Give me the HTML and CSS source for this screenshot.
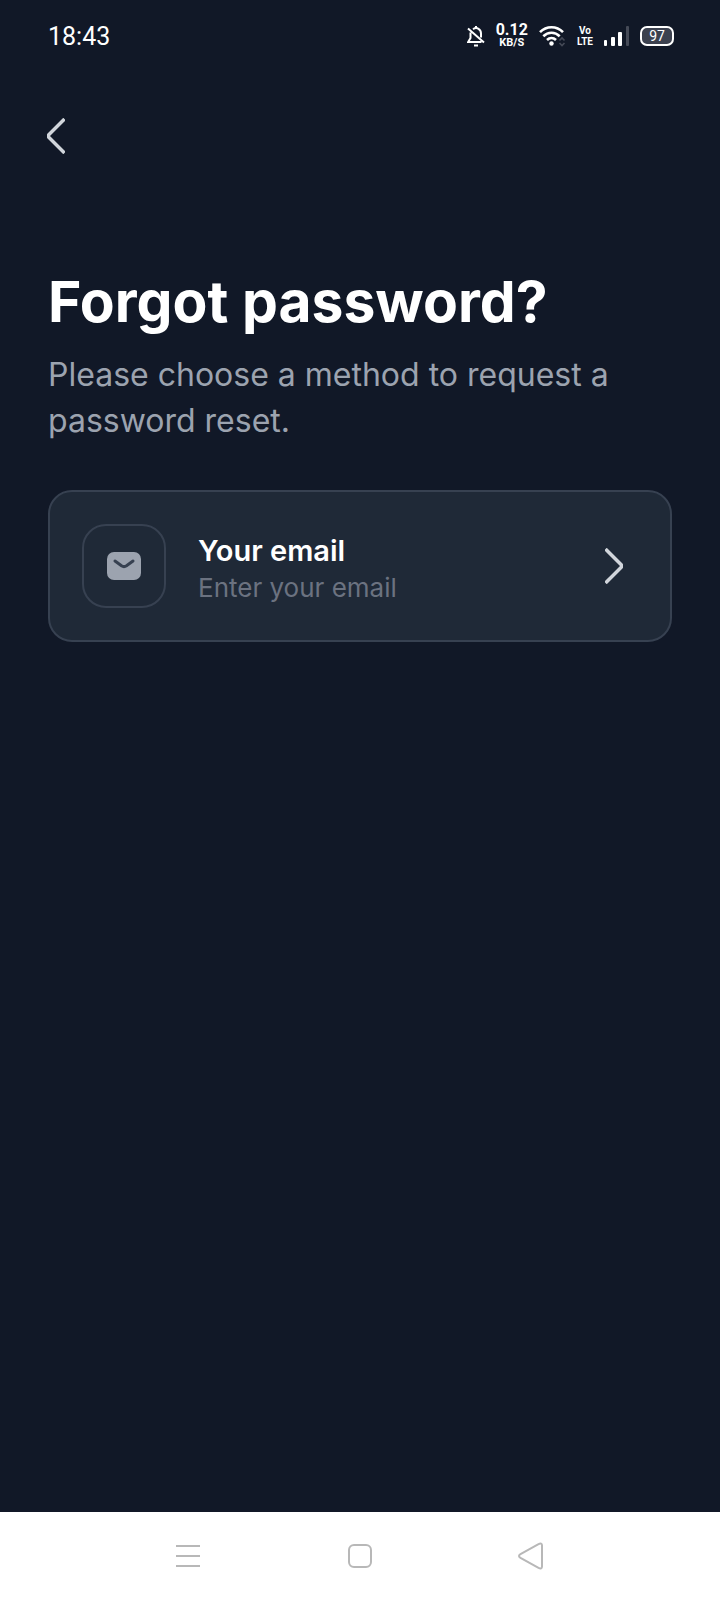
FILE: index.html
```
<!DOCTYPE html>
<html lang="en">
<head>
<meta charset="utf-8">
<meta name="viewport" content="width=device-width, initial-scale=1">
<title>Forgot password</title>
<link rel="stylesheet" href="styles.css">
</head>
<body>
<div class="screen">
  <header class="status">
    <time class="clock">18:43</time>
    <div class="indicators">
      <svg class="bell" width="18" height="22" viewBox="0 0 18 22" fill="none" stroke="currentColor" stroke-width="2">
        <path d="M6 4.200C10 1.400 14 4.500 14 8.500V12.500M3.500 7.500V13L1.200 17H14.500M1 3.500L17 17.500"/>
        <path d="M9 1v2M7 20.500h4"/>
      </svg>
      <div class="speed"><span class="rate">0.12</span><span class="unit">KB/S</span></div>
      <svg class="wifi" width="27" height="22" viewBox="0 0 27 22" fill="none" stroke="currentColor" stroke-width="2.600">
        <path d="M1 7.200C7.500 0.600 17.500 0.600 24 7.200M4.300 11.200C9 6.600 16 6.600 20.700 11.200M8 15C10.700 12.400 14.300 12.400 17 15"/>
        <circle cx="12.500" cy="18.500" r="2.200" fill="currentColor" stroke="none"/>
        <path class="dim" stroke-width="1.600" d="M20.500 15.500L23 13L25.500 15.500M20.500 18L23 20.500L25.500 18"/>
      </svg>
      <div class="volte"><span>Vo</span><span>LTE</span></div>
      <svg width="25" height="22" viewBox="0 0 25 22" fill="currentColor">
        <rect x="0" y="15" width="3" height="6" rx="1"/>
        <rect x="7" y="12" width="4" height="9" rx="1"/>
        <rect x="14" y="7" width="4" height="14" rx="1"/>
        <rect x="22" y="1" width="3" height="20" rx="1" fill="#454a57"/>
      </svg>
      <div class="battery">97</div>
    </div>
  </header>

  <main class="content">
    <button class="back" type="button" aria-label="Back">
      <svg width="18" height="36" viewBox="0 0 18 36" fill="none" stroke="currentColor" stroke-width="3.500"><path d="M17.500 1L2 16.500Q.5 18 2 19.500L17.500 35"/></svg>
    </button>
    <h1 class="title">Forgot password?</h1>
    <p class="lead">Please choose a method to request a password reset.</p>
    <button class="method" type="button">
      <span class="tile">
        <svg width="36" height="30" viewBox="0 0 36 30"><rect x="1" y="1" width="34" height="28" rx="7" fill="#9ca3af"/><path d="M9 10L15.500 14.800Q18 16.500 20.500 14.800L27 10" fill="none" stroke="#374151" stroke-width="3" stroke-linecap="round"/></svg>
      </span>
      <span class="labels">
        <span class="name">Your email</span>
        <span class="hint">Enter your email</span>
      </span>
      <svg class="go" width="18" height="36" viewBox="0 0 18 36" fill="none" stroke="currentColor" stroke-width="3.500"><path d="M.5 1L16 16.500Q17.500 18 16 19.500L.5 35"/></svg>
    </button>
  </main>

  <nav class="system" aria-label="System">
    <button type="button" aria-label="Recent apps"><svg width="28" height="28" viewBox="0 0 28 28"><path d="M2 4h24M2 14h24M2 24h24"/></svg></button>
    <button type="button" aria-label="Home"><svg width="28" height="28" viewBox="0 0 28 28"><rect x="3" y="3" width="22" height="22" rx="5"/></svg></button>
    <button type="button" aria-label="Back"><svg width="28" height="28" viewBox="0 0 28 28"><path d="M20.500 2.100Q24 .5 24 3.500V24.500Q24 27.500 20.500 25.900L2.500 15.800Q-.5 14 2.500 12.200Z"/></svg></button>
  </nav>
</div>
</body>
</html>
```
FILE: styles.css
```
* { box-sizing: border-box; }
body {
  margin: 0;
  background: #111827;
  color: #fff;
  font-family: Inter, "Liberation Sans", sans-serif;
}
button {
  margin: 0;
  padding: 0;
  border: 0;
  background: none;
  color: inherit;
  font: inherit;
  text-align: left;
  cursor: pointer;
}
svg { display: block; flex: none; }
.screen {
  display: flex;
  flex-direction: column;
  min-height: 100vh;
}
.status {
  display: flex;
  align-items: center;
  justify-content: space-between;
  height: 72px;
  padding: 0 46px 0 48px;
  font-family: Roboto, sans-serif;
}
.clock { padding-top: 2px; font-size: 25px; line-height: 32px; }
.indicators { display: flex; align-items: center; gap: 11px; }
.speed, .volte {
  display: flex;
  flex-direction: column;
  align-items: center;
  font-weight: 700;
}
.rate { font-size: 16px; line-height: 12px; }
.unit { font-size: 11px; line-height: 13px; }
.volte {
  font-family: "Liberation Sans Narrow", Roboto, sans-serif;
  font-size: 10px;
  line-height: 11px;
}
.dim { stroke: #454a57; }
.battery {
  width: 34px;
  height: 20px;
  border: 2px solid #fff;
  border-radius: 7px;
  background: #3c414f;
  font-size: 14px;
  line-height: 16px;
  text-align: center;
}
.content { flex: 1; padding: 0 48px; }
.back {
  display: block;
  margin: 46px 0 0 -1px;
  color: #d1d5db;
}
.title {
  margin: 112px 0 0;
  font-size: 57px;
  font-weight: 700;
  line-height: 72px;
}
.lead {
  margin: 14px 0 0;
  color: #9ca3af;
  font-size: 32px;
  line-height: 46px;
}
.method {
  display: flex;
  align-items: center;
  width: 100%;
  margin-top: 46px;
  padding: 32px 47px 32px 32px;
  border: 2px solid #374151;
  border-radius: 24px;
  background: #1f2937;
}
.tile {
  display: grid;
  place-items: center;
  flex: none;
  width: 84px;
  height: 84px;
  border: 2px solid #374151;
  border-radius: 24px;
}
.labels {
  display: flex;
  flex: 1;
  flex-direction: column;
  margin-left: 32px;
  padding-top: 3px;
}
.name { font-size: 29px; font-weight: 600; line-height: 40px; }
.hint { color: #6b7280; font-size: 26px; line-height: 34px; }
.go { color: #d1d5db; }
.system {
  display: flex;
  justify-content: space-between;
  height: 88px;
  padding: 0 174px;
  background: #fff;
}
.system svg { fill: none; stroke: #b8b8b8; stroke-width: 2; }
```
